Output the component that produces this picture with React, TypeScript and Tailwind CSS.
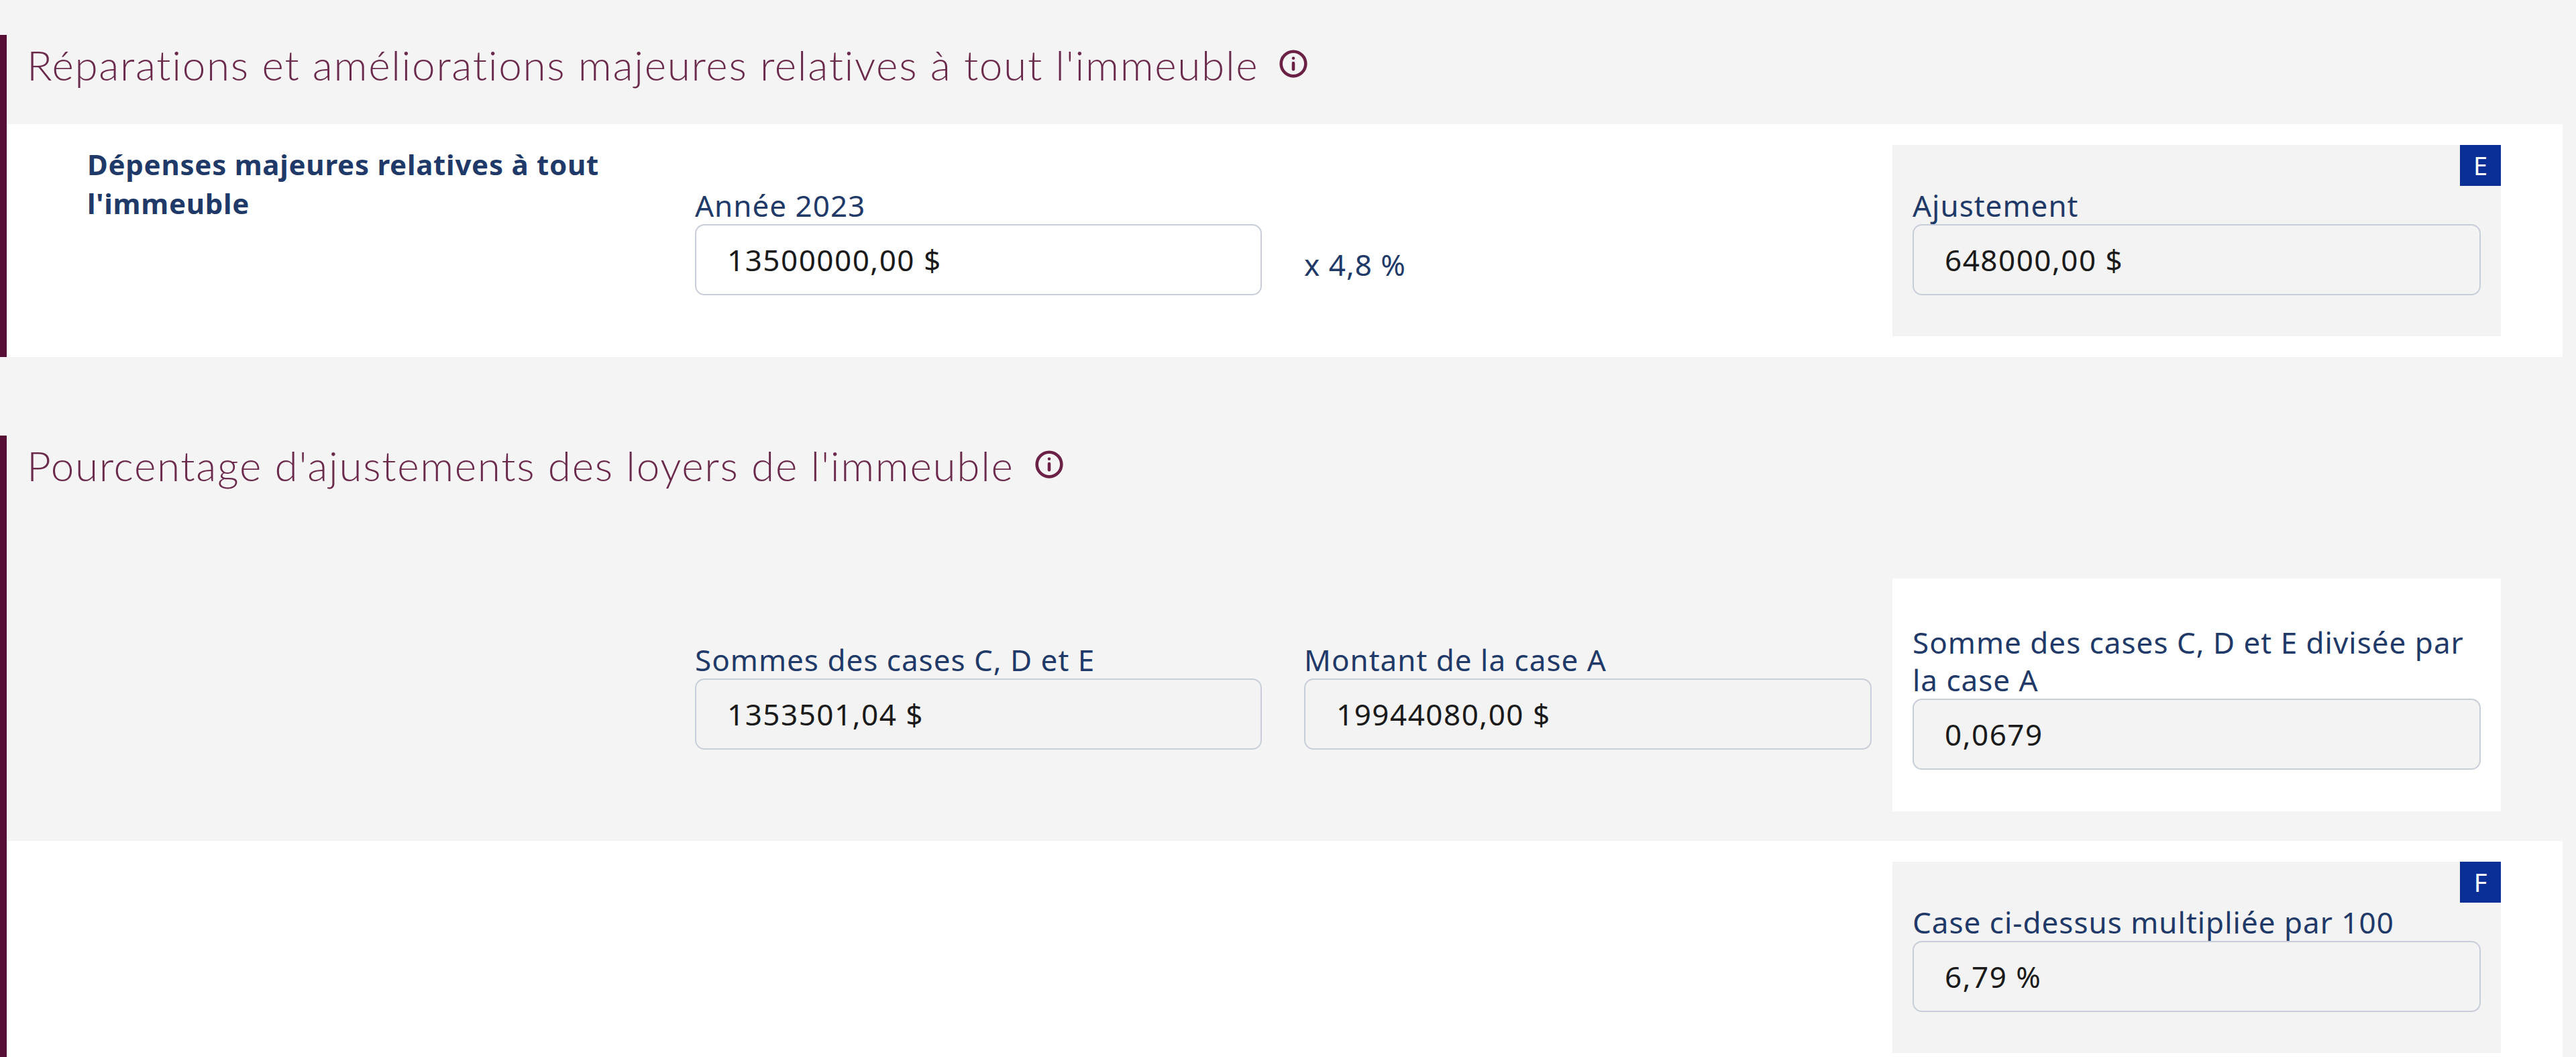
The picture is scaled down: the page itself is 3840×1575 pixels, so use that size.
import React from 'react';

const InfoIcon: React.FC = () => (
  <svg width="44" height="44" viewBox="0 0 24 24" fill="none" stroke="#6b2146" strokeWidth="2.5" strokeLinecap="round" className="shrink-0">
    <circle cx="12" cy="12" r="10" />
    <path d="M12 11.5v5" />
    <path d="M12 7.5h.01" />
  </svg>
);

const Title: React.FC<{ text: string }> = ({ text }) => (
  <div className="h-[133px] flex items-start pl-[30px] pt-[14px]">
    <h2 className="font-['Lato',sans-serif] font-light text-[62px] leading-[60px] tracking-[1.7px] text-[#6b2a4c] whitespace-nowrap">{text}</h2>
    <span className="ml-[30px] mt-[7px]"><InfoIcon /></span>
  </div>
);

interface FieldProps {
  label: string;
  value: string;
  editable?: boolean;
  width?: string;
}

const Field: React.FC<FieldProps> = ({ label, value, editable = false, width = 'w-full' }) => (
  <div className={width}>
    <label className="block text-[44px] leading-[56px] tracking-[1px] text-[#1f3a68]">{label}</label>
    <input
      readOnly
      value={value}
      className={`block w-full h-[106px] pl-[46px] rounded-[14px] border-2 border-[#c8ced9] text-[44px] tracking-[1.5px] text-[#1a1a1a] outline-none ${editable ? 'bg-white' : 'bg-[#f3f3f3]'}`}
    />
  </div>
);

const Badge: React.FC<{ letter: string }> = ({ letter }) => (
  <span className="absolute top-0 right-0 w-[61px] h-[61px] flex items-center justify-center bg-[#0a2f96] text-white text-[38px]">{letter}</span>
);

const App: React.FC = () => {
  return (
    <div className="h-screen overflow-hidden bg-[#f4f4f4] pt-[52px] pr-[20px] font-['Noto_Sans',sans-serif]">
      <section className="border-l-[10px] border-[#560e35]">
        <Title text="Réparations et améliorations majeures relatives à tout l'immeuble" />
        <div className="bg-white grid grid-cols-[1026px_908px_877px_907px] pt-[31px] pb-[31px]">
          <p className="pl-[120px] pr-[100px] text-[42px] leading-[58px] tracking-[0.75px] font-bold text-[#1f3a68]">Dépenses majeures relatives à tout l'immeuble</p>
          <div className="flex items-end pb-[61px]">
            <Field label="Année 2023" value="13500000,00 $" editable width="w-[845px]" />
          </div>
          <div className="flex items-end pb-[79px] text-[44px] leading-[56px] tracking-[1px] text-[#1f3a68]">x 4,8 %</div>
          <div className="relative h-[285px] bg-[#f3f3f3] flex items-end pb-[61px] px-[30px]">
            <Badge letter="E" />
            <Field label="Ajustement" value="648000,00 $" />
          </div>
        </div>
      </section>

      <section className="mt-[117px] border-l-[10px] border-[#560e35]">
        <Title text="Pourcentage d'ajustements des loyers de l'immeuble" />
        <div className="grid grid-cols-[1026px_908px_877px_907px] pt-[80px] pb-[44px]">
          <div />
          <div className="flex items-end pb-[92px]">
            <Field label="Sommes des cases C, D et E" value="1353501,04 $" width="w-[845px]" />
          </div>
          <div className="flex items-end pb-[92px]">
            <Field label="Montant de la case A" value="19944080,00 $" width="w-[846px]" />
          </div>
          <div className="h-[347px] bg-white flex items-end pb-[62px] px-[30px]">
            <Field label="Somme des cases C, D et E divisée par la case A" value="0,0679" />
          </div>
        </div>
        <div className="bg-white grid grid-cols-[2811px_907px] pt-[31px] pb-[31px]">
          <div />
          <div className="relative h-[285px] bg-[#f3f3f3] flex items-end pb-[61px] px-[30px]">
            <Badge letter="F" />
            <Field label="Case ci-dessus multipliée par 100" value="6,79 %" />
          </div>
        </div>
      </section>
    </div>
  );
};

export default App;
